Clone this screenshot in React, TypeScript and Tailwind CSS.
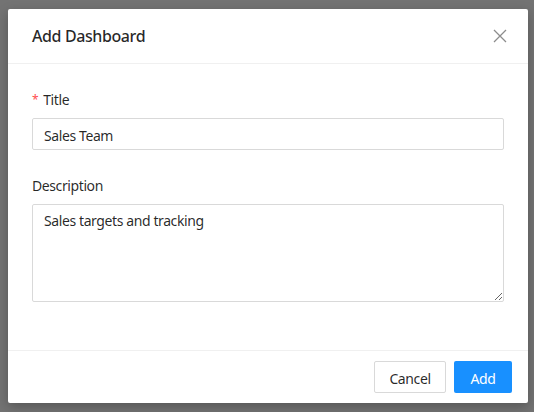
export default function App() {
  return (
    <div
      className="w-[534px] h-[412px] bg-[#737373] pt-[9px] pl-[8px] text-[14px] tracking-[-0.4px] text-[rgba(0,0,0,0.85)]"
      style={{ fontFamily: '"Noto Sans", "Open Sans", sans-serif' }}
    >
      <div className="w-[520px] bg-white rounded-[2px] shadow-[0_4px_12px_rgba(0,0,0,0.25)]">
        {/* Header */}
        <div className="flex items-center justify-between h-[55px] px-6 border-b border-[#f0f0f0]">
          <h2 className="text-[16px] font-medium leading-[22px] text-[rgba(0,0,0,0.85)]">Add Dashboard</h2>
          <svg className="w-[14px] h-[14px] mr-[-3px]" viewBox="0 0 14 14" fill="none" stroke="rgba(0,0,0,0.45)" strokeWidth={1.3}>
            <path d="M1 1l12 12M13 1L1 13" />
          </svg>
        </div>

        {/* Body */}
        <div className="p-6">
          <div className="mb-6">
            <label className="block leading-[22px] pt-[1px] mb-[7px]">
              <span className="text-[#ff4d4f] text-[12px] mr-[5px] align-[1px]">*</span>Title
            </label>
            <input
              type="text"
              defaultValue="Sales Team"
              className="block w-full h-[32px] px-[11px] pt-[2px] border border-[#d9d9d9] rounded-[2px] outline-none text-[14px] tracking-[-0.4px] text-[rgba(0,0,0,0.85)]"
            />
          </div>
          <div className="mb-6">
            <label className="block leading-[22px] pt-[1px] mb-[7px]">Description</label>
            <textarea
              defaultValue="Sales targets and tracking"
              className="block w-full h-[98px] px-[11px] pt-[5px] pb-[3px] leading-[22px] border border-[#d9d9d9] rounded-[2px] outline-none text-[14px] tracking-[-0.4px] text-[rgba(0,0,0,0.85)]"
            />
          </div>
        </div>

        {/* Footer */}
        <div className="flex justify-end gap-2 px-4 py-[10px] border-t border-[#f0f0f0]">
          <button className="h-[32px] w-[72px] pt-[2px] border border-[#d9d9d9] rounded-[2px] bg-white text-[rgba(0,0,0,0.85)]">
            Cancel
          </button>
          <button className="h-[32px] w-[58px] pt-[2px] rounded-[2px] bg-[#1890ff] text-white">
            Add
          </button>
        </div>
      </div>
    </div>
  );
}
